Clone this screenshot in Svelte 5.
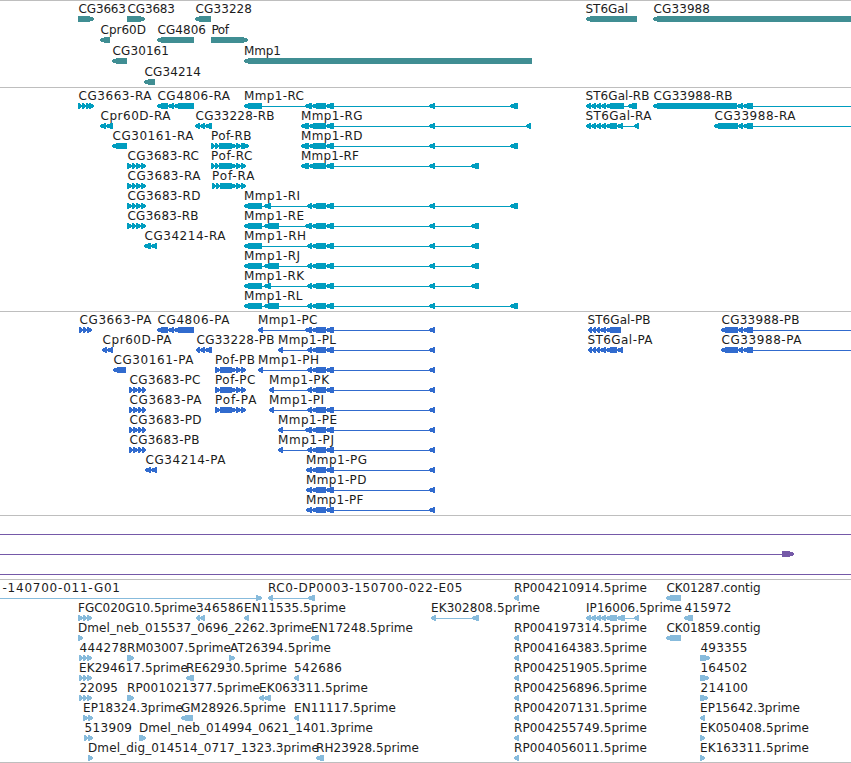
<script>
  // Feature: [row, strand, label, label start, label end, exon ranges, optional intron end]
  const exons = (text) => text.split(' ').filter(Boolean).map((r) => r.split('-').map(Number));

  const mmp = '312-326 326-334 429-435';
  const quad = '127-132 132-136 136-141 141-146';
  const pquad = '129-133 133-138 138-142 142-146';
  const trio = '79-83 83-87 87-92';

  const genes = [
    [0, 'R', 'CG3663', 78, 126, '78-94'],
    [0, 'R', 'CG3683', 127, 175, '127-145'],
    [0, 'L', 'CG33228', 195, 252, '195-211'],
    [0, 'L', 'ST6Gal', 585, 628, '586-637'],
    [0, 'L', 'CG33988', 653, 710, '653-851'],
    [1, 'L', 'Cpr60D', 100, 146, '100-110'],
    [1, 'L', 'CG4806', 157, 206, '157-194'],
    [1, 'R', 'Pof', 211, 229, '211-248'],
    [2, 'L', 'CG30161', 112, 169, '112-127'],
    [2, 'L', 'Mmp1', 243.5, 281, '244-532'],
    [3, 'L', 'CG34214', 144, 201, '144-155']
  ];

  const transcripts = [
    [0, 'R', 'CG3663-RA', 78, 151.5, '78-82 82-86 86-90 89-94'],
    [0, 'L', 'CG4806-RA', 157, 230, '157-168 168-174 174-194'],
    [0, 'L', 'Mmp1-RC', 243.5, 304, '244-262 305-312 ' + mmp + ' 510-518'],
    [0, 'L', 'ST6Gal-RB', 585, 649.5, '586-591 591-596 596-601 601-606 606-624 628-637'],
    [0, 'L', 'CG33988-RB', 653, 732.5, '653-737 737-743 743-753', 851],
    [1, 'L', 'Cpr60D-RA', 100, 170.5, '100-106 106-113'],
    [1, 'L', 'CG33228-RB', 195, 274.5, '195-200 200-205 205-212'],
    [1, 'L', 'Mmp1-RG', 300.5, 362.5, '301-309 309-326 326-334 429-435 526-531'],
    [1, 'L', 'ST6Gal-RA', 585, 651.5, '586-591 591-596 596-601 601-606 606-617 617-623 634-639'],
    [1, 'L', 'CG33988-RA', 714, 795.5, '714-738 738-743 743-753', 851],
    [2, 'L', 'CG30161-RA', 112, 193.5, '112-127'],
    [2, 'R', 'Pof-RB', 210.5, 251.5, '211-215 215-219 219-236 236-241 241-249'],
    [2, 'L', 'Mmp1-RD', 300.5, 362.5, '301-309 309-326 326-334 429-435 510-518'],
    [3, 'R', 'CG3683-RC', 127, 199, quad],
    [3, 'R', 'Pof-RC', 210.5, 252.5, '211-215 215-219 219-236 236-241 241-246'],
    [3, 'L', 'Mmp1-RF', 300.5, 359, '301-309 309-326 326-334 429-435 471-479'],
    [4, 'R', 'CG3683-RA', 127, 200.5, quad],
    [4, 'R', 'Pof-RA', 211.5, 254.5, '212-216 216-220 220-236 236-241 241-246'],
    [5, 'R', 'CG3683-RD', 127, 200.5, quad],
    [5, 'L', 'Mmp1-RI', 243.5, 300, '244-262 264-271 307-312 ' + mmp + ' 510-518'],
    [6, 'R', 'CG3683-RB', 127, 198.5, quad],
    [6, 'L', 'Mmp1-RE', 243.5, 304, '244-262 264-279 305-312 ' + mmp + ' 471-479'],
    [7, 'L', 'CG34214-RA', 144, 225.5, '144-151 151-157'],
    [7, 'L', 'Mmp1-RH', 243.5, 306, '244-262 307-312 ' + mmp + ' 471-479'],
    [8, 'L', 'Mmp1-RJ', 243.5, 300, '244-262 264-279 307-312 ' + mmp + ' 471-479'],
    [9, 'L', 'Mmp1-RK', 243.5, 304, '244-262 264-271 307-312 ' + mmp + ' 471-479'],
    [10, 'L', 'Mmp1-RL', 243.5, 302.5, '244-262 264-279 307-312 ' + mmp + ' 510-518']
  ];

  const proteins = [
    [0, 'R', 'CG3663-PA', 79, 151.5, trio],
    [0, 'L', 'CG4806-PA', 157, 229.5, '157-168 168-174 174-194'],
    [0, 'L', 'Mmp1-PC', 257.5, 317.5, '258-263 305-312 ' + mmp],
    [0, 'L', 'ST6Gal-PB', 587, 650.5, '588-592 592-596 596-600 600-606 606-621'],
    [0, 'L', 'CG33988-PB', 721, 799.5, '721-738 738-743 743-753', 851],
    [1, 'L', 'Cpr60D-PA', 102, 171.5, '102-107 107-113'],
    [1, 'L', 'CG33228-PB', 196, 274.5, '196-200 200-205 205-212'],
    [1, 'L', 'Mmp1-PL', 277.5, 336, '278-283 307-312 ' + mmp],
    [1, 'L', 'ST6Gal-PA', 587, 652.5, '588-592 592-596 596-600 600-606 606-617 617-623'],
    [1, 'L', 'CG33988-PA', 721, 801.5, '721-738 738-743 743-753', 851],
    [2, 'L', 'CG30161-PA', 113, 193.5, '113-126'],
    [2, 'R', 'Pof-PB', 214.5, 255, '215-220 220-236 236-241 241-246'],
    [2, 'L', 'Mmp1-PH', 257.5, 319, '258-263 307-312 ' + mmp],
    [3, 'R', 'CG3683-PC', 129, 200.5, pquad],
    [3, 'R', 'Pof-PC', 214.5, 255.5, '215-220 220-236 236-241 241-246'],
    [3, 'L', 'Mmp1-PK', 268.5, 329, '269-274 307-312 ' + mmp],
    [4, 'R', 'CG3683-PA', 129, 201.5, pquad],
    [4, 'R', 'Pof-PA', 214.5, 256.5, '215-220 220-236 236-241 241-246'],
    [4, 'L', 'Mmp1-PI', 268.5, 324, '269-274 307-312 ' + mmp],
    [5, 'R', 'CG3683-PD', 129, 201.5, pquad],
    [5, 'L', 'Mmp1-PE', 277.5, 337, '278-283 305-312 ' + mmp],
    [6, 'R', 'CG3683-PB', 129, 199.5, pquad],
    [6, 'L', 'Mmp1-PJ', 277.5, 334, '278-283 307-312 ' + mmp],
    [7, 'L', 'CG34214-PA', 145, 225.5, '145-151 151-157'],
    [7, 'L', 'Mmp1-PG', 305.5, 367, '306-312 ' + mmp],
    [8, 'L', 'Mmp1-PD', 305.5, 366.5, '306-312 ' + mmp],
    [9, 'L', 'Mmp1-PF', 305.5, 363.5, '306-312 ' + mmp]
  ];

  // The first clone starts left of the view, so its intron line begins at 0.
  const ests = [
    [0, 'R', '-140700-011-G01', 2, 120, '256-262', undefined, 0],
    [0, 'L', 'RC0-DP0003-150700-022-E05', 267.5, 462.5, '268-273 308-315'],
    [0, 'L', 'CK01287.contig', 666, 760.5, '666-681'],
    [1, 'R', 'FGC020G10.5prime', 77.5, 196.5, '78-83 83-87 87-92'],
    [1, 'L', '346586', 195.5, 243.5, '196-200 200-205'],
    [1, 'L', 'EN11535.5prime', 243.5, 346, '244-249'],
    [1, 'L', 'EK302808.5prime', 430.5, 540, '431-436 472-479'],
    [1, 'L', 'IP16006.5prime', 585.5, 682, '586-591 591-596 596-601 601-606 606-617 617-625 634-639'],
    [1, 'L', '415972', 684, 731.5, '684-693'],
    [2, 'R', 'Dmel_neb_015537_0696_2262.3prime', 77.5, 312, '78-83'],
    [2, 'L', 'EN17248.5prime', 310.5, 413, '311-319'],
    [2, 'L', 'CK01859.contig', 666, 760.5, '666-681'],
    [3, 'R', '444278', 79, 127, trio],
    [3, 'R', 'RM03007.5prime', 126.5, 231, '127-130 129-134'],
    [3, 'R', 'AT26394.5prime', 229.5, 331, '229-235'],
    [3, 'R', '493355', 700, 747.5, '700-710'],
    [4, 'R', 'EK294617.5prime', 78.5, 188, trio],
    [4, 'L', 'RE62930.5prime', 185.5, 287, '186-194'],
    [4, 'L', '542686', 293.5, 342, '294-299'],
    [4, 'R', '164502', 700, 747.5, '700-709'],
    [5, 'R', '22095', 79, 118, trio],
    [5, 'R', 'RP001021377.5prime', 126.5, 260, '127-130 129-134'],
    [5, 'L', 'EK063311.5prime', 258.5, 368, '259-264 264-271'],
    [5, 'R', '214100', 700, 748, '700-708'],
    [6, 'R', 'EP18324.3prime', 82.5, 183, '83-88 88-93'],
    [6, 'L', 'GM28926.5prime', 180.5, 286, '181-193'],
    [6, 'L', 'EN11117.5prime', 293.5, 396, '294-299'],
    [6, 'L', 'EP15642.3prime', 699.5, 800, '700-705'],
    [7, 'R', '513909', 84, 132, '84-88 88-93'],
    [7, 'R', 'Dmel_neb_014994_0621_1401.3prime', 138.5, 373, '139-142 141-146'],
    [7, 'R', 'EK050408.5prime', 699.5, 809, '700-705'],
    [8, 'R', 'Dmel_dig_014514_0717_1323.3prime', 87.5, 319, '88-93'],
    [8, 'L', 'RH23928.5prime', 315.5, 419, '316-324'],
    [8, 'R', 'EK163311.5prime', 699.5, 809, '700-705']
  ];

  ['004210914', null, '004197314', '004164383', '004251905', '004256896', '004207131', '004255749', '004056011']
    .forEach((id, row) => {
      if (id) ests.push([row, 'L', `RP${id}.5prime`, 513.5, 647, '514-519']);
    });

  const prepare = (list, pitch) =>
    list.map(([row, dir, label, x, end, text, lineEnd, lineStart]) => {
      const parts = exons(text);
      return {
        dir, label, x: x + 0.5, w: end - x - 0.5, y: row * pitch, parts,
        from: lineStart ?? parts[0][0],
        to: lineEnd ?? parts[parts.length - 1][1],
        spliced: parts.length > 1 || lineStart !== undefined
      };
    });

  const tracks = [
    { name: 'genes', color: '#408e93', height: 86, items: prepare(genes, 21) },
    { name: 'transcripts', color: '#009dbf', height: 223, items: prepare(transcripts, 20) },
    { name: 'proteins', color: '#316bce', height: 203, items: prepare(proteins, 20) },
    { name: 'alignments', color: '#7559a8', height: 63, items: [] },
    { name: 'ests', color: '#87bbdc', height: 182, items: prepare(ests, 20) }
  ];

  // Box six pixels high with a blunt, two-pixel tip on the strand's side.
  function shape(a, b, dir, y) {
    const tip = Math.min(5, b - a - 1);
    const t = y + 15, m = y + 17, n = y + 19, u = y + 21;
    return dir === 'L'
      ? `${a},${m} ${a + tip},${t} ${b},${t} ${b},${u} ${a + tip},${u} ${a},${n}`
      : `${b},${m} ${b - tip},${t} ${a},${t} ${a},${u} ${b - tip},${u} ${b},${n}`;
  }
</script>

<main>
  {#each tracks as track (track.name)}
    <section>
      <svg width="851" height={track.height} fill={track.color}>
        {#if track.name === 'alignments'}
          <rect x="0" y="18" width="851" height="1" />
          <rect x="0" y="38" width="782" height="1" />
          <polygon points={shape(782, 794, 'R', 20)} />
          <rect x="0" y="58" width="851" height="1" />
        {/if}
        {#each track.items as f}
          {#if f.spliced}
            <rect x={f.from} y={f.y + 18} width={f.to - f.from} height="1" />
          {/if}
          {#each f.parts as [a, b]}
            <polygon points={shape(a, b, f.dir, f.y)} />
          {/each}
        {/each}
        {#each track.items as f}
          <text x={f.x} y={f.y + 12} textLength={f.w}>{f.label}</text>
        {/each}
      </svg>
    </section>
  {/each}
</main>

<style>
  :global(body) {
    background: #fff;
  }
  main {
    display: flex;
    flex-direction: column;
    width: 851px;
    height: 763px;
    box-sizing: border-box;
    overflow: hidden;
    background: #fff;
  }
  section {
    border-top: 1px solid #bebebe;
  }
  section:last-child {
    border-bottom: 1px solid #bebebe;
  }
  svg {
    display: block;
  }
  rect,
  polygon {
    shape-rendering: crispEdges;
  }
  text {
    font: 12px 'DejaVu Sans', 'Noto Sans', sans-serif;
    fill: #1c1c1c;
  }
</style>
